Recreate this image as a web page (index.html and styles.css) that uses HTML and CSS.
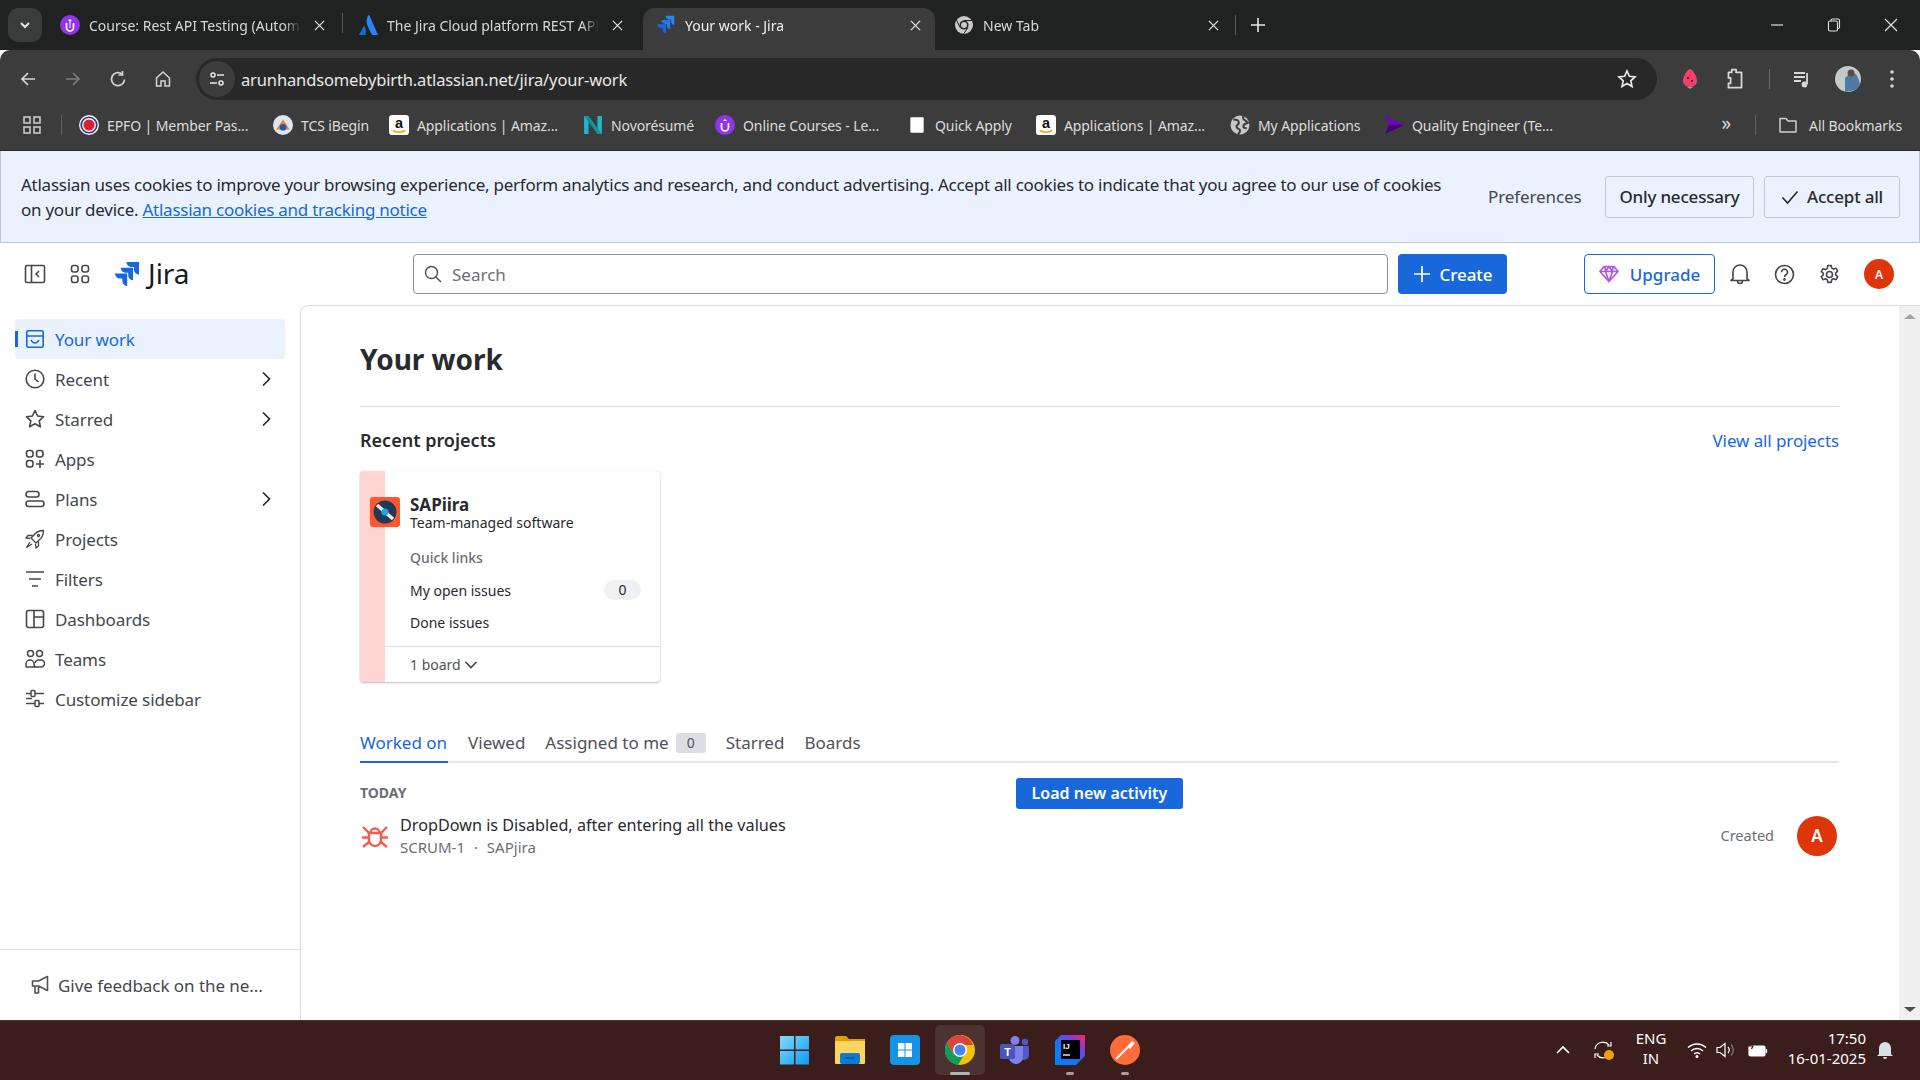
FILE: index.html
```html
<!DOCTYPE html>
<html lang="en">
<head>
    <meta charset="UTF-8">
    <title>Your work - Jira</title>
    <link rel="stylesheet" href="styles.css">
</head>
<body>
    <div class="tabstrip">
        <div class="tab-search"><svg width="14" height="14" viewBox="0 0 14 14" fill="none" stroke="#e8e8e8" stroke-width="2"><path d="M3 5l4 4 4-4"/></svg></div>
        <div class="tab">
            <svg class="favicon" viewBox="0 0 20 20"><circle cx="10" cy="10" r="10" fill="#9333ea"/><path d="M6.5 8v4.5a3.5 3.5 0 0 0 7 0V8" fill="none" stroke="#fff" stroke-width="1.7"/><path d="M10 4l2 2H8z" fill="#fff"/><path d="M10 6v7" stroke="#fff" stroke-width="1"/></svg>
            <span class="tab-title">Course: Rest API Testing (Autom</span>
            <svg class="tab-close" viewBox="0 0 12 12"><path d="M1 1l10 10M11 1 1 11"/></svg>
            <i class="tab-sep"></i>
        </div>
        <div class="tab">
            <svg class="favicon" viewBox="0 0 20 20"><path d="M6 10.500 1 20h6.500c1-3 .5-6.500-1.500-9.500z" fill="#1868db"/><path d="M10.500 0C8 4 8 8 10 12l4 8h6L11.500 .5c-.3-.6-.8-.6-1-.5z" fill="#2684ff"/></svg>
            <span class="tab-title">The Jira Cloud platform REST API</span>
            <svg class="tab-close" viewBox="0 0 12 12"><path d="M1 1l10 10M11 1 1 11"/></svg>
        </div>
        <div class="tab tab-active">
            <svg class="favicon" viewBox="0 0 24 24" fill="#2684ff"><path d="M22 1H11.500c0 2.600 2.100 4.700 4.700 4.700h1.900v1.900c0 2.600 2.100 4.700 3.900 4.700z"/><path d="M17 6H6.500c0 2.600 2.100 4.700 4.700 4.700h1.900v1.900c0 2.600 2.100 4.700 3.900 4.700z" fill="#1d7afc"/><path d="M12 11H1.500c0 2.600 2.100 4.700 4.700 4.700h1.900v1.900c0 2.600 2.100 4.700 3.900 4.700z" fill="#1868db"/></svg>
            <span class="tab-title">Your work - Jira</span>
            <svg class="tab-close" viewBox="0 0 12 12"><path d="M1 1l10 10M11 1 1 11"/></svg>
        </div>
        <div class="tab">
            <svg class="favicon" viewBox="0 0 20 20"><circle cx="10" cy="10" r="9" fill="#c8c8c8"/><circle cx="10" cy="10" r="4.500" fill="#202221"/><circle cx="10" cy="10" r="3" fill="#c8c8c8"/><path d="M10 5.500h8M6 12.500 2.500 5M14 12.500 9.500 19" stroke="#202221" stroke-width="1"/></svg>
            <span class="tab-title">New Tab</span>
            <svg class="tab-close" viewBox="0 0 12 12"><path d="M1 1l10 10M11 1 1 11"/></svg>
        </div>
        <i class="tab-sep-new"></i>
        <svg class="new-tab" width="16" height="16" viewBox="0 0 16 16" stroke="#e8e8e8" stroke-width="1.600"><path d="M8 1v14M1 8h14"/></svg>
        <div class="window-btns">
            <svg width="14" height="14" viewBox="0 0 14 14" stroke="#e0e0e0" stroke-width="1.200"><path d="M1 7h12"/></svg>
            <svg width="14" height="14" viewBox="0 0 14 14" fill="none" stroke="#e0e0e0" stroke-width="1.100"><rect x="1.500" y="3" width="9" height="10" rx="1.500"/><path d="M4 3V2.500A1.500 1.500 0 0 1 5.500 1H11a1.500 1.500 0 0 1 1.500 1.500V9a1.500 1.500 0 0 1-1.500 1.500"/></svg>
            <svg width="14" height="14" viewBox="0 0 14 14" stroke="#e0e0e0" stroke-width="1.200"><path d="M1 1l12 12M13 1 1 13"/></svg>
        </div>
    </div>

    <div class="toolbar">
        <div class="nav-btns">
            <svg width="18" height="18" viewBox="0 0 18 18" fill="none" stroke="#d5d5d5" stroke-width="1.700"><path d="M16 9H3M9 3 3 9l6 6"/></svg>
            <svg width="18" height="18" viewBox="0 0 18 18" fill="none" stroke="#7c7c7c" stroke-width="1.700"><path d="M2 9h13M9 3l6 6-6 6"/></svg>
            <svg width="18" height="18" viewBox="0 0 18 18" fill="none" stroke="#d5d5d5" stroke-width="1.700"><path d="M15.500 9.500A6.500 6.500 0 1 1 13 4"/><path d="M13.500 1v4h-4"/></svg>
            <svg width="18" height="18" viewBox="0 0 18 18" fill="none" stroke="#d5d5d5" stroke-width="1.500"><path d="M2.500 8 9 2l6.500 6v8H11v-5H7v5H2.500z"/></svg>
        </div>
        <div class="omnibox">
            <span class="site-info"><svg width="18" height="18" viewBox="0 0 18 18" fill="none" stroke="#e8e8e8" stroke-width="1.500"><circle cx="5" cy="5" r="2"/><path d="M9 5h7M2 13h7"/><circle cx="13" cy="13" r="2"/></svg></span>
            <span class="url">arunhandsomebybirth.atlassian.net/jira/your-work</span>
            <svg class="star" width="20" height="20" viewBox="0 0 20 20" fill="none" stroke="#e8e8e8" stroke-width="1.700"><path d="M10 2l2.400 5.300 5.600.6-4.200 3.900 1.200 5.700-5-2.900-5 2.900 1.200-5.700L2 7.900l5.600-.6z"/></svg>
        </div>
        <div class="ext-btns">
            <svg width="20" height="24" viewBox="0 0 20 24"><path d="M10 2c3 1 7 7 7 12 0 4-4 6-7 6s-7-2-7-6C3 9 7 3 10 2z" fill="#f43f6b"/><path d="M7 20l3 2 3-2" fill="#3fcf8e"/><circle cx="8" cy="11" r="1" fill="#4a0d20"/><circle cx="12" cy="14" r="1" fill="#4a0d20"/></svg>
            <svg class="ext-puzzle" width="22" height="24" viewBox="0 0 20 22" fill="none" stroke="#d8d8d8" stroke-width="1.600"><path d="M4 5h3V2.500h4V5h5v14H4v-4h2v-5H4z" stroke-linejoin="round"/></svg>
            <i class="ext-sep"></i>
            <svg class="ext-music" width="20" height="20" viewBox="0 0 20 20" fill="none" stroke="#d8d8d8" stroke-width="1.800"><path d="M2 4h11M2 8h11M2 12h7"/><path d="M15 4v11"/><circle cx="12.500" cy="15.500" r="2" fill="#d8d8d8"/></svg>
            <svg width="26" height="26" viewBox="0 0 26 26"><circle cx="13" cy="13" r="13" fill="#c4c9cc"/><path d="M10 26V12l5-5 6 1 3 6 1 5-4 5z" fill="#4e7ba3"/><circle cx="16" cy="7" r="3.500" fill="#5b4a40"/></svg>
            <svg class="ext-menu" width="6" height="20" viewBox="0 0 6 20" fill="#d8d8d8"><circle cx="3" cy="3" r="1.800"/><circle cx="3" cy="10" r="1.800"/><circle cx="3" cy="17" r="1.800"/></svg>
        </div>
    </div>

    <div class="bookmarks">
        <svg class="bm-apps" width="20" height="20" viewBox="0 0 20 20" fill="none" stroke="#d0d0d0" stroke-width="1.500"><rect x="2" y="2" width="6" height="6"/><rect x="12" y="2" width="6" height="6"/><rect x="2" y="12" width="6" height="6"/><rect x="12" y="12" width="6" height="6"/></svg>
        <i class="bm-sep"></i>
        <div class="bm bm-epfo"><svg viewBox="0 0 18 18"><circle cx="9" cy="9" r="9" fill="#f5f5f5"/><circle cx="9" cy="9" r="5" fill="#d8232a"/><circle cx="9" cy="9" r="7" fill="none" stroke="#28378a" stroke-width="1.500"/></svg>EPFO | Member Pas...</div>
        <div class="bm bm-tcs"><svg viewBox="0 0 18 18"><circle cx="9" cy="9" r="9" fill="#dfe6f2"/><path d="M3 13 9 4l6 9z" fill="#e8862a"/><circle cx="9" cy="11" r="3" fill="#2459a8"/></svg>TCS iBegin</div>
        <div class="bm bm-amz"><svg viewBox="0 0 18 18"><rect width="18" height="18" rx="3" fill="#fff"/><text x="9" y="12" text-anchor="middle" font-size="13" font-weight="700" fill="#111" font-family="Liberation Sans">a</text><path d="M3.500 14c3 2 8 2 11 0" fill="none" stroke="#f90" stroke-width="1.500"/></svg>Applications | Amaz...</div>
        <div class="bm bm-novo"><svg viewBox="0 0 18 18" fill="#20b8c4"><path d="M1 1h4v16H1zM13 1h4v16h-4z"/><path d="M1 1h4l12 16h-4z" fill="#16919c"/></svg>Novorésumé</div>
        <div class="bm bm-online"><svg viewBox="0 0 20 20"><circle cx="10" cy="10" r="10" fill="#9333ea"/><path d="M6.500 8v4.500a3.500 3.500 0 0 0 7 0V8" fill="none" stroke="#fff" stroke-width="1.700"/><path d="M10 4l2 2H8z" fill="#fff"/></svg>Online Courses - Le...</div>
        <div class="bm bm-quick"><svg viewBox="0 0 18 18"><rect x="3" y="2" width="12" height="14" rx="1" fill="#fff"/></svg>Quick Apply</div>
        <div class="bm bm-amz"><svg viewBox="0 0 18 18"><rect width="18" height="18" rx="3" fill="#fff"/><text x="9" y="12" text-anchor="middle" font-size="13" font-weight="700" fill="#111" font-family="Liberation Sans">a</text><path d="M3.500 14c3 2 8 2 11 0" fill="none" stroke="#f90" stroke-width="1.500"/></svg>Applications | Amaz...</div>
        <div class="bm bm-my"><svg viewBox="0 0 18 18"><circle cx="9" cy="9" r="8.500" fill="#c8c8c8"/><path d="M3 4c3 0 5 1 5 3S5 9 6 11s3 1 3 3-1 3-2 3.500M12 1c-1 2 0 3 2 4l2 2c-2 1-4 1-4 3s2 2 3 2" fill="none" stroke="#3c3c3c" stroke-width="1.800"/></svg>My Applications</div>
        <div class="bm bm-quality"><svg viewBox="0 0 20 18"><path d="M1 0l19 9-19 9 4-9z" fill="#7500c0"/><path d="M5 9 1 18 20 9z" fill="#460073"/></svg>Quality Engineer (Te...</div>
        <span class="bm-more">»</span>
        <i class="bm-sep bm-sep-end"></i>
        <div class="bm bm-all"><svg viewBox="0 0 20 18" fill="none" stroke="#d0d0d0" stroke-width="1.500"><path d="M2 2.500h6l2 2.500h8v11H2z" stroke-linejoin="round"/></svg>All Bookmarks</div>
    </div>

    <div class="cookie-banner">
        <p class="cookie-text">Atlassian uses cookies to improve your browsing experience, perform analytics and research, and conduct advertising. Accept all cookies to indicate that you agree to our use of cookies<br>on your device. <a href="#">Atlassian cookies and tracking notice</a></p>
        <span class="cookie-pref">Preferences</span>
        <span class="cookie-btn cookie-only">Only necessary</span>
        <span class="cookie-btn cookie-accept"><svg width="18" height="18" viewBox="0 0 18 18" fill="none" stroke="#292a2e" stroke-width="1.600"><path d="M1.500 9.500 6.500 15 16.500 3.500"/></svg>Accept all</span>
    </div>

    <header class="jira-header">
        <div class="header-left">
            <svg width="22" height="20" viewBox="0 0 22 20" fill="none" stroke="#44474d" stroke-width="1.600"><rect x="1.500" y="1.500" width="19" height="17" rx="1.500"/><path d="M7.500 1.500v17M15 7l-3 3 3 3"/></svg>
            <svg width="20" height="20" viewBox="0 0 20 20" fill="none" stroke="#44474d" stroke-width="1.600"><rect x="1.500" y="1.500" width="6.500" height="6.500" rx="2.200"/><rect x="12" y="1.500" width="6.500" height="6.500" rx="2.200"/><rect x="1.500" y="12" width="6.500" height="6.500" rx="2.200"/><rect x="12" y="12" width="6.500" height="6.500" rx="2.200"/></svg>
            <div class="jira-logo">
                <svg width="24" height="24" viewBox="0 0 24 24" fill="#1868db"><path d="M24 0H11.500c0 2.800 2.300 5 5 5h2.400v2.400c0 2.600 2.100 5 5.100 5z"/><path d="M18 5.800H5.800c0 2.800 2.300 5 5 5h2.400v2.400c0 2.600 2.100 5 4.800 5z"/><path d="M12.200 11.600H0c0 2.800 2.300 5 5 5h2.400V19c0 2.600 2.100 5 4.800 5z"/></svg>
                <span>Jira</span>
            </div>
        </div>
        <div class="search">
            <svg width="18" height="18" viewBox="0 0 18 18" fill="none" stroke="#505258" stroke-width="1.500"><circle cx="7.500" cy="7.500" r="6"/><path d="M12 12l5 5"/></svg>
            <span>Search</span>
        </div>
        <span class="create-btn"><svg width="18" height="18" viewBox="0 0 18 18" stroke="#fff" stroke-width="1.700"><path d="M9 1v16M1 9h16"/></svg>Create</span>
        <span class="upgrade-btn"><svg width="20" height="18" viewBox="0 0 20 18" fill="none" stroke="#af59e1" stroke-width="1.700"><path d="M5 1.500h10L19 6.500 10 16.500 1 6.500zM1 6.500h18M6.500 6.500 10 16.500l3.500-10M6 1.500l.5 5 3.500-5 3.500 5 .5-5" stroke-linejoin="round"/></svg>Upgrade</span>
        <div class="header-icons">
            <svg width="20" height="22" viewBox="0 0 20 22" fill="none" stroke="#44474d" stroke-width="1.600"><path d="M3 16V9a7 7 0 0 1 14 0v7l2 1.500H1z" stroke-linejoin="round"/><path d="M7.500 18a2.500 2.500 0 0 0 5 0"/></svg>
            <svg width="21" height="21" viewBox="0 0 21 21" fill="none" stroke="#44474d" stroke-width="1.600"><circle cx="10.500" cy="10.500" r="9"/><path d="M7.500 8.200a3 3 0 1 1 4.500 2.600c-1 .6-1.500 1-1.500 2.200"/><circle cx="10.500" cy="15.500" r=".6"/></svg>
            <svg width="21" height="21" viewBox="0 0 21 21" fill="none" stroke="#44474d" stroke-width="1.600"><path d="M8.800 1.500h3.400l.5 2.600 1.800 1 2.500-.9 1.700 3-2 1.700v2.100l2 1.700-1.700 3-2.500-.9-1.800 1-.5 2.600H8.800l-.5-2.600-1.800-1-2.500.9-1.700-3 2-1.700V9.400l-2-1.700 1.700-3 2.500.9 1.800-1z" stroke-linejoin="round"/><circle cx="10.500" cy="10.500" r="3"/></svg>
            <span class="user-avatar">A</span>
        </div>
    </header>

    <div class="workspace">
        <aside class="sidebar">
            <nav class="side-nav">
                <a class="nav-item nav-active"><svg viewBox="0 0 20 20" fill="none" stroke="currentColor" stroke-width="1.600"><rect x="1.800" y="1.800" width="16.400" height="16.400" rx="1.500"/><path d="M2 7h16M6 11c1 2 2.500 3 4 3s3-1 4-3"/></svg>Your work</a>
                <a class="nav-item"><svg viewBox="0 0 20 20" fill="none" stroke="currentColor" stroke-width="1.600"><circle cx="10" cy="10" r="8.800"/><path d="M10 4.500V10l3.500 3"/></svg>Recent<svg class="chev" viewBox="0 0 16 16" fill="none" stroke="currentColor" stroke-width="1.700"><path d="M5 1.500 11.500 8 5 14.500"/></svg></a>
                <a class="nav-item"><svg viewBox="0 0 20 20" fill="none" stroke="currentColor" stroke-width="1.600"><path d="M10 1.500l2.600 5.500 6 .7-4.400 4.100 1.200 6L10 14.800 4.600 17.800l1.200-6L1.400 7.700l6-.7z" stroke-linejoin="round"/></svg>Starred<svg class="chev" viewBox="0 0 16 16" fill="none" stroke="currentColor" stroke-width="1.700"><path d="M5 1.500 11.500 8 5 14.500"/></svg></a>
                <a class="nav-item"><svg viewBox="0 0 20 20" fill="none" stroke="currentColor" stroke-width="1.600"><rect x="1.500" y="1.500" width="6.500" height="6.500" rx="2.500"/><rect x="11.500" y="1.500" width="6.500" height="6.500" rx="2.500"/><rect x="1.500" y="11.500" width="6.500" height="6.500" rx="2.500"/><path d="M15 11v8M11 15h8"/></svg>Apps</a>
                <a class="nav-item"><svg viewBox="0 0 20 20" fill="none" stroke="currentColor" stroke-width="1.600"><rect x="1" y="2.500" width="13" height="5.500" rx="2.700"/><rect x="1" y="12" width="18" height="5.500" rx="2.700"/></svg>Plans<svg class="chev" viewBox="0 0 16 16" fill="none" stroke="currentColor" stroke-width="1.700"><path d="M5 1.500 11.500 8 5 14.500"/></svg></a>
                <a class="nav-item"><svg viewBox="0 0 20 20" fill="none" stroke="currentColor" stroke-width="1.300"><path d="M18.500 1.500c-4 0-7.500 1.500-10 5L6 9l5 5 2.500-2.500c3.500-2.500 5-6 5-10zM7.500 6.500H3L1 9l4 .5M13.500 12.500V17L11 19l-.5-4M5 13 1.500 18.500 7 15"/><circle cx="13.500" cy="6.500" r="1"/></svg>Projects</a>
                <a class="nav-item"><svg viewBox="0 0 20 20" fill="none" stroke="currentColor" stroke-width="1.700"><path d="M1 3h18M4 10h12M7 17h6"/></svg>Filters</a>
                <a class="nav-item"><svg viewBox="0 0 20 20" fill="none" stroke="currentColor" stroke-width="1.600"><rect x="1.500" y="1.500" width="17" height="17" rx="2"/><path d="M9 1.500v17M9 8h9.500"/></svg>Dashboards</a>
                <a class="nav-item"><svg viewBox="0 0 20 20" fill="none" stroke="currentColor" stroke-width="1.500"><circle cx="5.500" cy="4.500" r="3"/><circle cx="14.500" cy="4.500" r="3"/><path d="M1 18v-3a4 4 0 0 1 8 0c0 3 2 3 2 3h5a3.500 3.500 0 0 0 0-7h-2a4 4 0 0 0-4 3M1 18h10"/></svg>Teams</a>
                <a class="nav-item"><svg viewBox="0 0 20 20" fill="none" stroke="currentColor" stroke-width="1.500"><rect x="6" y="1.500" width="4" height="6" rx="1"/><path d="M1 4.500h5M10 4.500h9M1 14.500h9M14 14.500h5M1 9.500h6"/><rect x="10" y="11.500" width="4" height="6" rx="1"/></svg>Customize sidebar</a>
            </nav>
            <div class="side-feedback"><svg width="20" height="20" viewBox="0 0 20 20" fill="none" stroke="#505258" stroke-width="1.600"><path d="M1.500 6h6l9-4.500v14l-9-4.500h-6zM4 11.500V18h3.500v-6.500" stroke-linejoin="round"/></svg>Give feedback on the ne...</div>
        </aside>

        <main class="content">
            <h1>Your work</h1>
            <hr class="rule">
            <div class="section-head">
                <h2>Recent projects</h2>
                <a class="link" href="#">View all projects</a>
            </div>

            <div class="card">
                <div class="card-strip">
                    <svg class="project-icon" viewBox="0 0 30 30"><rect width="30" height="30" rx="3" fill="#ff5630"/><circle cx="15" cy="15" r="11.500" fill="#253858"/><path d="M7 8l16 14" stroke="#ebecf0" stroke-width="3.500"/><circle cx="15" cy="15" r="3.500" fill="#00b8d9"/><circle cx="15" cy="15" r="1.500" fill="#8777d9"/></svg>
                </div>
                <div class="card-body">
                    <div class="card-main">
                        <div class="project-name">SAPiira</div>
                        <div class="project-type">Team-managed software</div>
                        <div class="quick-title">Quick links</div>
                        <div class="quick-row">My open issues<span class="pill">0</span></div>
                        <div class="quick-row">Done issues</div>
                    </div>
                    <div class="card-foot">1 board <svg width="14" height="14" viewBox="0 0 14 14" fill="none" stroke="#44474d" stroke-width="1.700"><path d="M1.500 4 7 9.500 12.500 4"/></svg></div>
                </div>
            </div>

            <div class="tabs">
                <span class="tabs-item tabs-active">Worked on</span>
                <span class="tabs-item">Viewed</span>
                <span class="tabs-item">Assigned to me<b class="tabs-count">0</b></span>
                <span class="tabs-item">Starred</span>
                <span class="tabs-item">Boards</span>
            </div>

            <div class="today-row">
                <span class="today">TODAY</span>
                <span class="load-btn">Load new activity</span>
            </div>

            <div class="activity">
                <svg class="bug" viewBox="0 0 28 24" fill="none" stroke="#f15b50" stroke-width="2.400"><path d="M6.500 9h15M9.500 9a4.500 4.500 0 0 1 9 0M8 9v7a6 6 0 0 0 12 0V9M1 13.500h7M20 13.500h7M2 3l6 6M26 3l-6 6M2 23l6-5M26 23l-6-5"/></svg>
                <div class="activity-text">
                    <div class="activity-title">DropDown is Disabled, after entering all the values</div>
                    <div class="activity-sub">SCRUM-1 <span class="dot">·</span> SAPjira</div>
                </div>
                <span class="activity-created">Created</span>
                <span class="activity-avatar">A</span>
            </div>
        </main>

        <div class="scrollbar">
            <i class="arrow-up"></i>
            <i class="arrow-down"></i>
        </div>
    </div>

    <footer class="taskbar">
        <div></div>
        <div class="task-icons">
            <span class="task"><svg width="30" height="30" viewBox="0 0 30 30"><defs><linearGradient id="win" x1="0" y1="0" x2="1" y2="1"><stop offset="0" stop-color="#7fdcff"/><stop offset="1" stop-color="#0e9bf0"/></linearGradient></defs><path d="M0 1h14v13.500H0zM15.500 1H29v13.500H15.500zM0 16h14v13.500H0zM15.500 16H29v13.500H15.500z" fill="url(#win)"/></svg></span>
            <span class="task"><svg width="30" height="28" viewBox="0 0 30 28"><path d="M0 2a2 2 0 0 1 2-2h9l3 3h16v6H0z" fill="#e0a100"/><rect y="5" width="30" height="23" rx="1" fill="#ffd55f"/><rect x="5" y="17" width="20" height="11" rx="2" fill="#0d7bd0"/><path d="M10 22h10" stroke="#0a4f8a" stroke-width="1.200"/></svg></span>
            <span class="task"><svg width="30" height="30" viewBox="0 0 30 30"><rect width="30" height="30" rx="4" fill="#1593e6"/><path d="M8 8h6.500v6.500H8zM15.500 8H22v6.500h-6.500zM8 15.500h6.500V22H8zM15.500 15.500H22V22h-6.500z" fill="#fff"/></svg></span>
            <span class="task task-on"><svg width="30" height="30" viewBox="0 0 30 30"><circle cx="15" cy="15" r="15" fill="#f4c20d"/><path d="M15 0A15 15 0 0 0 2 7.500L8.500 19 15 10h13A15 15 0 0 0 15 0z" fill="#db4437"/><path d="M2 7.500A15 15 0 0 0 13 30l6.500-11H8.500z" fill="#0f9d58"/><circle cx="15" cy="15" r="7" fill="#fff"/><circle cx="15" cy="15" r="5.500" fill="#4285f4"/></svg><i class="task-bar task-bar-wide"></i></span>
            <span class="task"><svg width="30" height="28" viewBox="0 0 30 28"><circle cx="15" cy="4.500" r="4.500" fill="#7b83eb"/><circle cx="25" cy="6" r="3.200" fill="#5059c9"/><path d="M20 10h9v9a5 5 0 0 1-5 5h-4z" fill="#5059c9"/><path d="M9 10h14v11a7 7 0 0 1-14 0z" fill="#7b83eb"/><rect y="8" width="15" height="15" rx="1.500" fill="#4b53bc"/><text x="7.500" y="20" text-anchor="middle" font-size="11" font-weight="700" fill="#fff" font-family="Liberation Sans">T</text></svg></span>
            <span class="task"><svg width="30" height="30" viewBox="0 0 30 30"><defs><linearGradient id="ij" x1="0" y1="1" x2="1" y2="0"><stop offset=".35" stop-color="#087cfa"/><stop offset=".7" stop-color="#7a3de0"/><stop offset="1" stop-color="#fe2857"/></linearGradient></defs><path d="M6 0h24v21l-9 9H0V6z" fill="url(#ij)"/><rect x="6" y="5" width="19" height="19" fill="#000"/><text x="8" y="14" font-size="8" font-weight="700" fill="#fff" font-family="Liberation Sans">IJ</text><path d="M8 20h7" stroke="#fff" stroke-width="1.300"/></svg><i class="task-bar"></i></span>
            <span class="task"><svg width="30" height="30" viewBox="0 0 30 30"><circle cx="15" cy="15" r="15" fill="#ff6c37"/><path d="M6 24 20 10" stroke="#fff" stroke-width="2"/><path d="M17 12l5-6 3 2-5 6z" fill="#fff"/></svg><i class="task-bar"></i></span>
        </div>
        <div class="tray">
            <svg class="tray-chev" width="14" height="10" viewBox="0 0 14 10" fill="none" stroke="#fff" stroke-width="1.700"><path d="M1 8l6-6 6 6"/></svg>
            <span class="tray-sync"><svg width="20" height="20" viewBox="0 0 20 20" fill="none" stroke="#fff" stroke-width="1.200"><path d="M2 9a8 8 0 0 1 14-4M18 2v4h-4M18 11a8 8 0 0 1-14 4M2 18v-4h4"/></svg><i class="sync-dot"></i></span>
            <div class="tray-lang">ENG<br>IN</div>
            <svg class="tray-wifi" width="20" height="16" viewBox="0 0 20 16" fill="none" stroke="#fff" stroke-width="1.500"><path d="M1 5.500a13 13 0 0 1 18 0M4 9a8.500 8.500 0 0 1 12 0M7 12a4 4 0 0 1 6 0"/><circle cx="10" cy="14.500" r=".8" fill="#fff"/></svg>
            <svg class="tray-sound" width="20" height="16" viewBox="0 0 20 16" fill="none" stroke="#fff" stroke-width="1.200"><path d="M1 5.500h3L9 1.500v13l-5-4H1z"/><path d="M12 5a4.500 4.500 0 0 1 0 6"/><path d="M15 2.500a8 8 0 0 1 0 11" stroke="#8d7775"/></svg>
            <svg class="tray-battery" width="20" height="16" viewBox="0 0 20 16" fill="none" stroke="#fff" stroke-width="1.200"><rect x="1" y="4" width="16" height="10" rx="1.500" fill="#fff"/><path d="M18.500 7v4"/><path d="M4 1 2 4h3L3.500 7" stroke="#3b1d1b"/></svg>
            <div class="clock">17:50<br>16-01-2025</div>
            <svg width="16" height="20" viewBox="0 0 16 20"><path d="M2 14V8a6 6 0 0 1 12 0v6l2 2H0z" fill="#d8e0e2"/><path d="M6 17h4a2 2 0 0 1-4 0z" fill="#d8e0e2"/></svg>
        </div>
    </footer>
</body>
</html>
```

FILE: styles.css
```css
* {
    box-sizing: border-box;
}

body {
    margin: 0;
    height: 100vh;
    overflow: hidden;
    display: flex;
    flex-direction: column;
    font-family: "Noto Sans", Arial, sans-serif;
    color: #292a2e;
    background: #fff;
}

/* browser chrome */
.tabstrip {
    height: 50px;
    flex: none;
    display: flex;
    align-items: flex-end;
    padding-left: 8px;
    background: #202221;
    color: #d8d8d8;
    font-size: 14px;
}

.tab-search {
    width: 34px;
    height: 34px;
    margin: 0 5px 8px 0;
    border-radius: 10px;
    background: #3a3b3b;
    display: flex;
    align-items: center;
    justify-content: center;
}

.tab {
    position: relative;
    width: 298px;
    height: 42px;
    padding: 0 0 8px 13px;
    display: flex;
    align-items: center;
}

.tab-active {
    width: 292px;
    margin-right: 6px;
    border-radius: 12px 12px 0 0;
    background: #3c3c3c;
    color: #f0f0f0;
}

.favicon {
    width: 20px;
    height: 20px;
    flex: none;
}

.tab-title {
    width: 212px;
    margin-left: 9px;
    white-space: nowrap;
    overflow: hidden;
    -webkit-mask-image: linear-gradient(to right, #000 92%, transparent);
    mask-image: linear-gradient(to right, #000 92%, transparent);
}

.tab-close {
    width: 11px;
    height: 11px;
    margin-left: 13px;
    flex: none;
    stroke: #e0e0e0;
    stroke-width: 1.400;
}

.tab-sep {
    position: absolute;
    right: 2px;
    top: 5px;
    width: 1px;
    height: 20px;
    background: #5a5a5a;
}

.tab-sep-new {
    width: 1px;
    height: 20px;
    margin: 0 14px 15px -4px;
    background: #5a5a5a;
}

.new-tab {
    margin-bottom: 17px;
}

.window-btns {
    margin-left: auto;
    margin-bottom: 18px;
    padding-right: 22px;
    display: flex;
    gap: 43px;
}

.toolbar {
    height: 55px;
    flex: none;
    display: flex;
    align-items: flex-start;
    padding-top: 8px;
    background: #3c3c3c;
    border-radius: 10px 10px 0 0;
}

.nav-btns {
    width: 196px;
    height: 42px;
    padding-left: 19px;
    display: flex;
    align-items: center;
    gap: 27px;
}

.omnibox {
    width: 1461px;
    height: 42px;
    padding: 0 20px 0 3px;
    border-radius: 21px;
    background: #282828;
    display: flex;
    align-items: center;
    color: #e8e8e8;
}

.site-info {
    width: 36px;
    height: 36px;
    border-radius: 50%;
    background: #3c3c3c;
    display: flex;
    align-items: center;
    justify-content: center;
}

.url {
    margin-left: 6px;
    font-size: 16.500px;
    letter-spacing: -0.14px;
}

.star {
    margin-left: auto;
}

.ext-btns {
    flex: 1;
    height: 42px;
    padding-left: 23px;
    display: flex;
    align-items: center;
    gap: 23px;
}

.ext-puzzle {
    margin-left: 1px;
}

.ext-sep {
    width: 1px;
    height: 20px;
    background: #6a6a6a;
}

.ext-music {
    margin-left: -1px;
}

.ext-menu {
    margin-left: 5px;
}

.bookmarks {
    height: 46px;
    flex: none;
    padding: 0 18px 5px 22px;
    display: flex;
    align-items: center;
    background: #3c3c3c;
    color: #dcdcdc;
    font-size: 14px;
    letter-spacing: -0.1px;
    border-bottom: 1px solid #2a2a2a;
}

.bm-sep {
    width: 1px;
    height: 20px;
    margin: 0 17px 0 19px;
    background: #5f5f5f;
}

.bm {
    display: flex;
    align-items: center;
    gap: 8px;
    white-space: nowrap;
}

.bm svg {
    width: 20px;
    height: 20px;
    flex: none;
}

.bm-epfo { width: 194px; }
.bm-tcs { width: 116px; }
.bm-amz { width: 194px; }
.bm-novo { width: 132px; }
.bm-online { width: 192px; }
.bm-quick { width: 129px; }
.bm-my { width: 154px; }

.bm-more {
    margin-left: auto;
    font-size: 19px;
    line-height: 1;
    margin-bottom: 3px;
}

.bm-sep-end {
    margin: 0 22px 0 24px;
}

.bm-all {
    gap: 11px;
}

/* cookie banner */
.cookie-banner {
    height: 92px;
    flex: none;
    padding: 0 19px 0 20px;
    display: flex;
    align-items: center;
    background: #e9f2fe;
    border: 1px solid #c3c7cf;
    border-top: 0;
    font-size: 17px;
}

.cookie-text {
    width: 1467px;
    margin: 0;
    line-height: 25px;
    flex: none;
    white-space: nowrap;
    letter-spacing: -0.255px;
    color: #292a2e;
}

.cookie-text a {
    color: #1868db;
}

.cookie-pref {
    width: 117px;
    color: #44474d;
    letter-spacing: -0.1px;
}

.cookie-btn {
    height: 42px;
    display: flex;
    align-items: center;
    justify-content: center;
    gap: 8px;
    white-space: nowrap;
    border: 1px solid #c3c7cf;
    border-radius: 3px;
    font-weight: 500;
    letter-spacing: -0.2px;
}

.cookie-only {
    width: 149px;
    margin-right: 10px;
}

.cookie-accept {
    width: 136px;
}

/* jira top bar */
.jira-header {
    height: 62px;
    flex: none;
    display: flex;
    align-items: center;
    padding-right: 24px;
}

.header-left {
    width: 413px;
    padding-left: 24px;
    display: flex;
    align-items: center;
    gap: 24px;
}

.jira-logo {
    margin-left: 1px;
    display: flex;
    align-items: center;
    gap: 9px;
    font-size: 28px;
    color: #161a1d;
}

.jira-logo span {
    margin-bottom: 2px;
}

.search {
    width: 975px;
    height: 40px;
    padding: 0 10px;
    display: flex;
    align-items: center;
    gap: 10px;
    border: 1px solid #8c8f97;
    border-radius: 4px;
    font-size: 17px;
    color: #6b6e76;
}

.create-btn {
    width: 109px;
    height: 40px;
    margin-left: 10px;
    display: flex;
    align-items: center;
    justify-content: center;
    gap: 9px;
    border-radius: 4px;
    background: #1868db;
    color: #fff;
    font-size: 17px;
    font-weight: 500;
    letter-spacing: -0.1px;
}

.upgrade-btn {
    width: 131px;
    height: 40px;
    margin-left: 77px;
    display: flex;
    align-items: center;
    justify-content: center;
    gap: 11px;
    border: 1px solid #1868db;
    border-radius: 4px;
    color: #1868db;
    font-size: 17px;
    font-weight: 500;
}

.header-icons {
    margin-left: 15px;
    display: flex;
    align-items: center;
    gap: 24px;
}

.user-avatar {
    width: 30px;
    height: 30px;
    border-radius: 50%;
    background: #de350b;
    color: #fff;
    font-size: 12px;
    font-weight: 600;
    display: flex;
    align-items: center;
    justify-content: center;
}

.workspace {
    flex: 1;
    min-height: 0;
    display: flex;
}

/* sidebar */
.sidebar {
    width: 300px;
    flex: none;
    display: flex;
    flex-direction: column;
}

.side-nav {
    flex: 1;
    padding: 14px 15px 0;
}

.nav-item {
    position: relative;
    height: 40px;
    padding: 0 11px 0 10px;
    display: flex;
    align-items: center;
    gap: 10px;
    border-radius: 4px;
    color: #44474d;
    font-size: 17px;
    letter-spacing: -0.1px;
}

.nav-item > svg {
    width: 20px;
    height: 20px;
    flex: none;
}

.nav-item > svg.chev {
    width: 16px;
    height: 16px;
    margin-left: auto;
    color: #292a2e;
}

.nav-active {
    background: #e9f2fe;
    color: #1868db;
}

.nav-active::before {
    content: "";
    position: absolute;
    left: 0;
    top: 12px;
    width: 3px;
    height: 16px;
    background: #1868db;
}

.side-feedback {
    height: 71px;
    padding-left: 31px;
    display: flex;
    align-items: center;
    gap: 7px;
    border-top: 1px solid #dddee1;
    color: #44474d;
    font-size: 17px;
    letter-spacing: -0.05px;
}

/* main panel */
.content {
    flex: 1;
    min-width: 0;
    padding: 0 60px 0 59px;
    border-top: 1px solid #dddee1;
    border-left: 1px solid #dddee1;
    border-radius: 8px 0 0 0;
    overflow: hidden;
}

.content h1 {
    margin: 33px 0 0;
    font-size: 28px;
    line-height: 40px;
    font-weight: 700;
    color: #292a2e;
}

.rule {
    margin: 27px 0 0;
    border: 0;
    border-top: 1px solid #dddee1;
}

.section-head {
    margin-top: 21px;
    display: flex;
    justify-content: space-between;
    align-items: center;
}

.section-head h2 {
    margin: 0;
    font-size: 18px;
    line-height: 24px;
    font-weight: 600;
}

.link {
    color: #1868db;
    font-size: 17px;
    letter-spacing: -0.1px;
    text-decoration: none;
}

.card {
    width: 300px;
    height: 211px;
    margin-top: 19px;
    display: flex;
    border-radius: 4px;
    box-shadow: 0 1px 2px rgba(9, 30, 66, 0.28), 0 0 1px rgba(9, 30, 66, 0.2);
    overflow: hidden;
    font-size: 14px;
}

.card-strip {
    position: relative;
    width: 25px;
    flex: none;
    background: #ffd5d2;
}

.project-icon {
    position: absolute;
    left: 10px;
    top: 26px;
    width: 30px;
    height: 30px;
}

.card-body {
    flex: 1;
    display: flex;
    flex-direction: column;
}

.card-main {
    flex: 1;
    padding: 24px 19px 0 25px;
}

.project-name {
    font-size: 17px;
    line-height: 20px;
    font-weight: 700;
}

.project-type {
    line-height: 16px;
}

.quick-title {
    margin-top: 18px;
    line-height: 18px;
    color: #6b6e76;
    font-weight: 500;
}

.quick-row {
    margin-top: 13px;
    height: 20px;
    display: flex;
    align-items: center;
    justify-content: space-between;
    color: #292a2e;
}

.quick-row + .quick-row {
    margin-top: 12px;
}

.pill {
    width: 37px;
    height: 20px;
    border-radius: 10px;
    background: #f0f1f2;
    text-align: center;
    line-height: 20px;
}

.card-foot {
    height: 36px;
    padding-left: 25px;
    display: flex;
    align-items: center;
    gap: 3px;
    border-top: 1px solid #dddee1;
    color: #505258;
}

.tabs {
    margin-top: 48px;
    height: 33px;
    display: flex;
    gap: 20px;
    border-bottom: 2px solid #e5e6e9;
    font-size: 17px;
    color: #505258;
}

.tabs-item {
    height: 33px;
    display: flex;
    align-items: flex-start;
    line-height: 26px;
    white-space: nowrap;
}

.tabs-active {
    padding-right: 1px;
    color: #1868db;
    border-bottom: 2px solid #1868db;
}

.tabs-count {
    width: 30px;
    height: 20px;
    margin: 3px 0 0 7px;
    border-radius: 3px;
    background: #dddee1;
    text-align: center;
    line-height: 20px;
    font-size: 14px;
    font-weight: 400;
}

.today-row {
    margin-top: 15px;
    display: flex;
    align-items: center;
    height: 31px;
}

.today {
    width: 656px;
    margin-bottom: 2px;
    font-size: 14px;
    font-weight: 700;
    color: #6b6e76;
}

.load-btn {
    width: 167px;
    height: 31px;
    border-radius: 3px;
    background: #1868db;
    color: #fff;
    text-align: center;
    line-height: 31px;
    font-size: 16px;
    font-weight: 600;
}

.activity {
    margin-top: 5px;
    padding-right: 2px;
    display: flex;
    align-items: center;
}

.bug {
    width: 28px;
    height: 24px;
    margin-left: 1px;
    flex: none;
}

.activity-text {
    margin-left: 11px;
    flex: 1;
}

.activity-title {
    font-size: 16.200px;
    line-height: 23px;
}

.activity-sub {
    font-size: 15px;
    line-height: 20px;
    color: #6b6e76;
}

.dot {
    margin: 0 5px;
}

.activity-created {
    margin: 0 23px 2px 0;
    font-size: 14.500px;
    color: #6b6e76;
}

.activity-avatar {
    width: 40px;
    height: 40px;
    border-radius: 50%;
    background: #de350b;
    color: #fff;
    font-size: 17px;
    font-weight: 600;
    display: flex;
    align-items: center;
    justify-content: center;
}

.scrollbar {
    width: 21px;
    flex: none;
    padding: 8px 0;
    display: flex;
    flex-direction: column;
    align-items: center;
    justify-content: space-between;
    border-top: 1px solid #dddee1;
    background: #f0f0f0;
}

.arrow-up {
    border: 6px solid transparent;
    border-top: 0;
    border-bottom: 5px solid #a3a3a3;
}

.arrow-down {
    border: 6px solid transparent;
    border-bottom: 0;
    border-top: 5px solid #505050;
}

/* windows taskbar */
.taskbar {
    height: 60px;
    flex: none;
    padding-bottom: 2px;
    display: grid;
    grid-template-columns: minmax(0, 1fr) auto minmax(0, 1fr);
    align-items: center;
    background: #3b1d1b;
    border-top: 1px solid #4d3533;
    color: #fff;
}

.task-icons {
    display: flex;
    gap: 5px;
}

.task {
    position: relative;
    width: 50px;
    height: 50px;
    display: flex;
    align-items: center;
    justify-content: center;
    border-radius: 5px;
}

.task-on {
    background: #4c3230;
}

.task-bar {
    position: absolute;
    left: 21px;
    bottom: 0;
    width: 8px;
    height: 3px;
    border-radius: 2px;
    background: #a89d9c;
}

.task-bar-wide {
    left: 15px;
    width: 20px;
    background: #a9b8ba;
}

.tray {
    display: flex;
    align-items: center;
    justify-content: flex-end;
    padding-right: 27px;
}

.tray-chev {
    margin-right: 23px;
}

.tray-sync {
    position: relative;
    display: flex;
    margin-right: 19px;
}

.sync-dot {
    position: absolute;
    right: -1px;
    bottom: 0;
    width: 10px;
    height: 10px;
    border-radius: 50%;
    background: #f59e0b;
}

.tray-lang {
    width: 38px;
    margin: 0 17px 3px 0;
    font-size: 15px;
    line-height: 20px;
    text-align: center;
}

.tray-wifi {
    margin-right: 9px;
}

.tray-sound {
    margin-right: 12px;
}

.tray-battery {
    margin-right: 8px;
}

.clock {
    width: 90px;
    margin: 0 11px 3px 0;
    font-size: 15px;
    line-height: 20px;
    text-align: right;
    white-space: nowrap;
}
```
